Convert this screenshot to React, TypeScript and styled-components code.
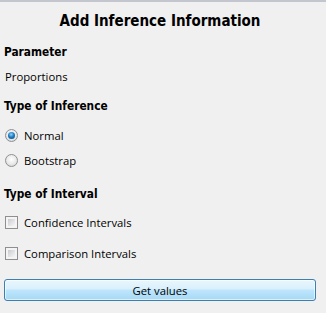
import React from 'react';
import styled, { createGlobalStyle } from 'styled-components';

const GlobalStyle = createGlobalStyle`
  html, body {
    margin: 0;
    padding: 0;
    background: #f0f0f0;
  }
`;

const Panel = styled('div')`
  display: flex;
  flex-direction: column;
  box-sizing: border-box;
  width: 326px;
  height: 313px;
  padding: 0 10px 0 4px;
  border-top: 2px solid #c3c6cf;
  background: #f0f0f0;
  font-family: 'Open Sans', 'Noto Sans', sans-serif;
  font-size: 11.3px;
  color: #000;
`;

const Title = styled('div')`
  height: 38px;
  display: flex;
  align-items: center;
  justify-content: center;
  font-family: 'DejaVu Sans Condensed', 'DejaVu Sans', sans-serif;
  font-weight: bold;
  font-size: 15px;
`;

const Heading = styled('div')<{ $top: number }>`
  height: 24px;
  margin-top: ${(p) => p.$top}px;
  display: flex;
  align-items: center;
  font-family: 'DejaVu Sans Condensed', 'DejaVu Sans', sans-serif;
  font-weight: bold;
  font-size: 11.8px;
`;

const Row = styled('label')<{ $top: number }>`
  height: 24px;
  margin-top: ${(p) => p.$top}px;
  display: flex;
  align-items: center;
  gap: 6px;
  padding-left: 1px;
`;

const Radio = styled('span')<{ $checked?: boolean }>`
  position: relative;
  box-sizing: border-box;
  width: 13px;
  height: 13px;
  border-radius: 50%;
  border: 1px solid #8f9092;
  background: radial-gradient(circle at 50% 40%, #ffffff 0%, #e9e9e9 55%, #c9cbce 100%);
  &::after {
    content: '';
    display: ${(p) => (p.$checked ? 'block' : 'none')};
    position: absolute;
    left: 2px;
    top: 2px;
    width: 7px;
    height: 7px;
    border-radius: 50%;
    background: radial-gradient(circle at 45% 35%, #8fd6fb 0%, #1f7cc6 45%, #0a437c 100%);
  }
`;

const Check = styled('span')`
  box-sizing: border-box;
  width: 13px;
  height: 13px;
  border: 1px solid #8f8f8f;
  padding: 2px;
  background: #f4f4f4;
  &::after {
    content: '';
    display: block;
    width: 100%;
    height: 100%;
    background: linear-gradient(135deg, #c8cbd0 0%, #e4e5e7 60%, #f6f6f6 100%);
  }
`;

const Button = styled('button')`
  margin-top: 14px;
  height: 22px;
  width: 312px;
  box-sizing: border-box;
  border: 1px solid #3c7fb1;
  border-radius: 3px;
  background: linear-gradient(#eaf6fd 0%, #d9f0fc 45%, #bee6fd 50%, #a7d9f5 100%);
  box-shadow: inset 0 0 0 1px rgba(255, 255, 255, 0.6);
  font-family: 'Open Sans', 'Noto Sans', sans-serif;
  font-size: 11.3px;
  color: #000;
  padding: 0;
`;

export default function App() {
  return (
    <>
      <GlobalStyle />
      <Panel>
        <Title>Add Inference Information</Title>
        <Heading $top={0}>Parameter</Heading>
        <Row as="div" $top={0}>Proportions</Row>
        <Heading $top={6}>Type of Inference</Heading>
        <Row $top={5}>
          <Radio $checked />
          Normal
        </Row>
        <Row $top={1}>
          <Radio />
          Bootstrap
        </Row>
        <Heading $top={10}>Type of Interval</Heading>
        <Row $top={4}>
          <Check />
          Confidence Intervals
        </Row>
        <Row $top={7}>
          <Check />
          Comparison Intervals
        </Row>
        <Button>Get values</Button>
      </Panel>
    </>
  );
}
